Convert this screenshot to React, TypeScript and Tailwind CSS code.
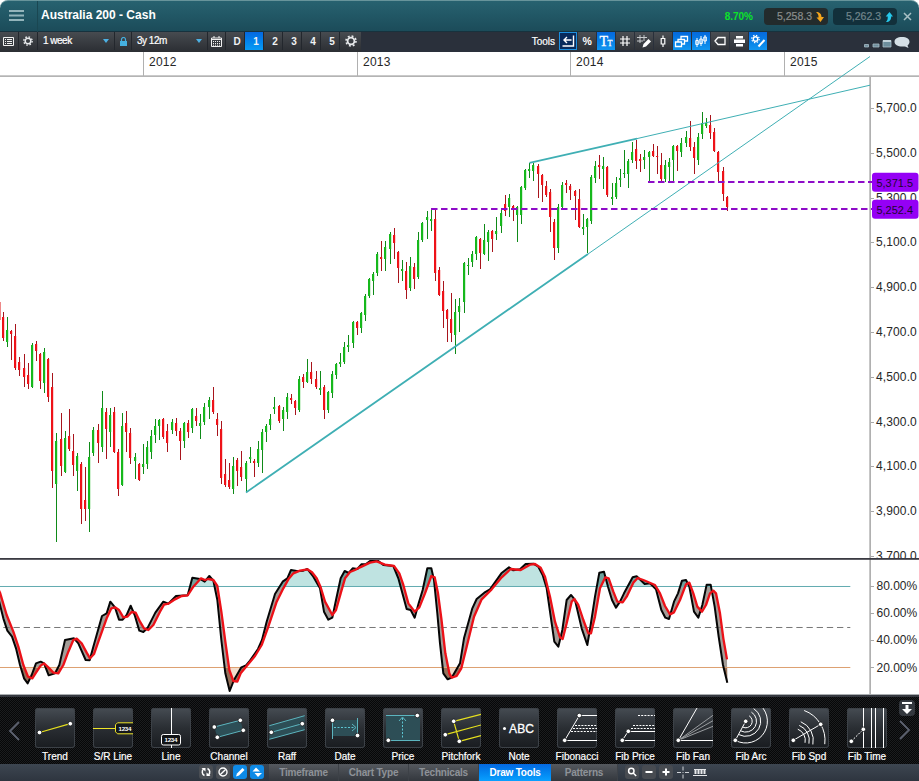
import type { ReactNode } from "react";
import clsx from "clsx";

type Candle = ["r" | "g", number, number, number, number];

// [colour, high, body top, body bottom, low]
const candles: Candle[] = [
  ["r", 312, 317, 338, 341], ["g", 317, 330, 342, 347], ["r", 330, 331, 334, 360], ["r", 324, 336, 368, 370],
  ["r", 357, 362, 370, 376], ["r", 354, 368, 377, 387], ["r", 363, 375, 384, 389], ["g", 343, 345, 387, 388],
  ["r", 341, 344, 351, 361], ["r", 353, 354, 381, 389], ["g", 348, 352, 383, 393], ["r", 358, 359, 397, 402],
  ["r", 373, 387, 471, 488], ["g", 433, 441, 484, 542], ["r", 413, 439, 466, 476], ["g", 431, 438, 472, 473],
  ["r", 409, 436, 449, 451], ["r", 434, 451, 465, 476], ["g", 453, 456, 471, 491], ["r", 462, 464, 509, 524],
  ["r", 467, 500, 509, 521], ["g", 442, 457, 509, 532], ["g", 427, 430, 453, 456], ["r", 424, 430, 443, 463],
  ["g", 391, 408, 447, 452], ["r", 408, 412, 429, 459], ["g", 408, 415, 432, 447], ["r", 407, 412, 452, 453],
  ["r", 449, 452, 489, 496], ["g", 413, 426, 485, 486], ["r", 411, 423, 432, 452], ["r", 428, 433, 458, 464],
  ["g", 453, 457, 461, 479], ["r", 463, 464, 480, 481], ["g", 444, 464, 467, 474], ["g", 441, 447, 464, 469],
  ["g", 430, 436, 452, 459], ["g", 419, 426, 435, 443], ["g", 419, 420, 426, 440], ["r", 418, 419, 437, 439],
  ["r", 424, 431, 443, 452], ["g", 419, 422, 430, 434], ["r", 418, 423, 431, 436], ["r", 428, 431, 441, 460],
  ["g", 422, 423, 441, 448], ["r", 420, 423, 432, 438], ["g", 408, 409, 428, 433], ["r", 408, 416, 421, 426],
  ["g", 414, 423, 426, 439], ["g", 403, 407, 422, 425], ["g", 397, 400, 407, 419], ["r", 387, 400, 412, 414],
  ["r", 413, 419, 425, 436], ["r", 421, 429, 478, 484], ["r", 459, 474, 485, 487], ["r", 463, 480, 487, 489],
  ["g", 457, 466, 489, 494], ["r", 458, 460, 471, 486], ["r", 451, 467, 477, 481], ["g", 461, 463, 479, 492],
  ["g", 447, 457, 459, 463], ["r", 459, 461, 463, 477], ["g", 441, 449, 463, 467], ["g", 429, 432, 450, 473],
  ["g", 424, 426, 432, 442], ["g", 414, 419, 425, 430], ["g", 397, 407, 409, 414], ["r", 405, 406, 421, 423],
  ["g", 407, 410, 419, 431], ["g", 393, 397, 412, 419], ["r", 394, 398, 400, 404], ["r", 400, 401, 408, 415],
  ["g", 376, 379, 410, 412], ["r", 374, 377, 382, 388], ["g", 359, 372, 382, 383], ["r", 362, 372, 379, 384],
  ["r", 371, 379, 387, 389], ["g", 371, 388, 390, 395], ["r", 385, 387, 410, 419], ["g", 391, 392, 410, 413],
  ["g", 371, 374, 393, 398], ["g", 363, 364, 375, 379], ["g", 353, 362, 364, 367], ["g", 342, 347, 362, 364],
  ["g", 335, 345, 347, 352], ["g", 321, 322, 343, 348], ["r", 321, 322, 328, 335], ["g", 312, 313, 328, 333],
  ["g", 294, 296, 315, 321], ["g", 278, 279, 296, 298], ["g", 272, 274, 281, 295], ["g", 252, 254, 273, 276],
  ["r", 241, 257, 259, 271], ["g", 241, 247, 259, 271], ["g", 232, 234, 249, 264], ["r", 228, 235, 243, 259],
  ["r", 251, 252, 268, 283], ["g", 260, 269, 271, 281], ["r", 262, 271, 290, 299], ["g", 257, 266, 288, 291],
  ["r", 263, 267, 279, 289], ["g", 232, 240, 277, 279], ["g", 222, 223, 240, 242], ["g", 211, 217, 220, 239],
  ["g", 209, 219, 221, 231], ["r", 209, 219, 273, 281], ["r", 267, 270, 295, 296], ["r", 281, 291, 311, 328],
  ["r", 309, 310, 319, 342], ["r", 293, 319, 333, 342], ["g", 299, 312, 335, 354], ["g", 298, 306, 312, 332],
  ["g", 262, 263, 302, 313], ["g", 258, 265, 266, 275], ["g", 251, 254, 262, 267], ["g", 236, 237, 254, 260],
  ["r", 238, 239, 253, 269], ["g", 224, 240, 254, 255], ["g", 230, 232, 242, 261], ["r", 230, 231, 239, 252],
  ["g", 217, 231, 234, 240], ["g", 208, 213, 226, 233], ["r", 195, 204, 211, 216], ["g", 194, 198, 207, 217],
  ["r", 205, 206, 210, 221], ["g", 206, 207, 215, 242], ["g", 186, 187, 215, 224], ["g", 169, 170, 188, 190],
  ["g", 163, 169, 171, 178], ["g", 163, 165, 171, 181], ["r", 164, 166, 174, 198], ["r", 174, 175, 185, 202],
  ["r", 181, 186, 195, 197], ["r", 189, 192, 217, 232], ["r", 219, 222, 248, 260], ["g", 204, 207, 248, 253],
  ["g", 182, 185, 207, 209], ["r", 180, 183, 185, 193], ["r", 184, 186, 190, 200], ["r", 190, 191, 196, 220],
  ["r", 189, 199, 227, 228], ["g", 214, 227, 229, 235], ["g", 218, 219, 227, 253], ["g", 175, 177, 221, 224],
  ["g", 161, 166, 178, 183], ["r", 155, 165, 167, 179], ["g", 157, 166, 169, 189], ["r", 166, 167, 195, 197],
  ["g", 183, 197, 199, 205], ["g", 177, 183, 197, 199], ["g", 169, 178, 180, 187], ["g", 150, 173, 174, 178],
  ["g", 159, 161, 174, 188], ["g", 142, 152, 160, 163], ["r", 140, 149, 161, 169], ["r", 154, 159, 161, 172],
  ["g", 150, 157, 160, 169], ["g", 151, 152, 157, 182], ["r", 144, 151, 156, 157], ["r", 146, 156, 157, 174],
  ["r", 153, 165, 179, 181], ["g", 160, 165, 179, 182], ["g", 158, 162, 167, 182], ["g", 145, 146, 160, 182],
  ["r", 145, 146, 151, 171], ["g", 138, 143, 152, 157], ["g", 131, 137, 143, 147], ["r", 121, 138, 147, 151],
  ["r", 142, 147, 158, 174], ["g", 133, 137, 160, 165], ["g", 112, 123, 134, 139], ["g", 118, 123, 126, 128],
  ["r", 115, 125, 133, 139], ["r", 128, 132, 151, 152], ["r", 151, 152, 172, 181], ["r", 167, 171, 194, 201],
  ["r", 196, 197, 207, 211],
];

// oscillator lines, in thirds of a pixel
const fastLine =
  "-6,140 0,165 10,205 22,242 36,260 48,295 60,345 72,385 83,400 95,375 108,340 122,335 132,340 146,376 165,370 178,345 195,270 222,265 235,280 257,330 269,331 280,290 306,198 320,190 331,155 345,172 357,209 368,209 380,195 392,167 404,195 418,242 430,246 442,235 466,188 490,155 505,161 528,138 563,136 577,83 600,87 614,95 628,78 640,92 652,150 664,270 676,370 689,423 702,390 724,352 738,346 750,332 774,297 786,270 800,215 825,132 848,95 862,85 873,60 890,63 910,62 922,57 940,80 960,115 972,185 985,209 997,203 1008,150 1022,85 1034,63 1046,69 1058,55 1072,57 1084,43 1098,42 1110,33 1135,33 1150,45 1180,48 1195,85 1220,177 1232,180 1244,203 1256,160 1268,120 1282,55 1294,55 1302,90 1312,190 1320,280 1330,370 1343,388 1355,383 1380,340 1392,265 1417,175 1430,147 1453,128 1470,118 1504,70 1527,52 1540,61 1560,58 1577,42 1600,41 1615,50 1628,75 1640,115 1663,275 1675,290 1687,240 1700,150 1713,135 1725,150 1745,235 1762,285 1772,225 1785,140 1798,68 1812,65 1824,110 1836,150 1848,173 1860,155 1872,130 1898,82 1910,79 1934,102 1950,100 1968,118 1984,180 1996,203 2007,207 2022,155 2034,130 2046,92 2058,90 2068,110 2082,185 2095,203 2107,165 2120,104 2132,104 2144,170 2156,260 2169,345 2182,398";
const slowLine =
  "-6,115 0,128 20,195 40,245 55,290 70,345 84,380 97,385 110,365 122,347 132,340 145,352 160,368 175,370 190,345 205,305 220,270 230,266 245,280 260,308 270,325 282,312 295,275 320,205 334,175 345,172 357,180 370,202 382,200 395,186 407,188 420,215 432,235 445,240 460,225 480,185 492,164 505,161 525,148 545,138 563,136 580,110 603,85 615,90 625,87 640,90 652,108 664,185 676,275 688,360 700,393 712,395 722,370 740,348 765,318 785,285 805,230 830,155 850,115 865,88 880,70 900,62 922,58 936,67 950,85 962,112 975,155 997,195 1008,180 1022,130 1035,85 1050,66 1065,60 1080,52 1110,38 1130,34 1155,44 1182,48 1198,70 1210,105 1225,160 1244,185 1258,172 1275,130 1294,78 1304,82 1314,130 1324,205 1336,310 1348,370 1355,383 1370,378 1384,355 1400,290 1422,200 1445,148 1475,118 1505,82 1532,57 1562,60 1590,44 1605,42 1622,53 1635,80 1650,140 1665,215 1680,262 1688,267 1700,220 1715,155 1723,147 1735,165 1750,210 1765,250 1773,250 1785,200 1800,115 1816,82 1826,85 1840,125 1852,155 1868,157 1880,140 1900,98 1913,84 1930,90 1965,105 1980,130 1995,168 2010,193 2022,187 2040,150 2058,103 2068,98 2080,130 2092,170 2106,185 2118,165 2130,130 2140,122 2148,130 2160,190 2170,265 2181,328";
const band = `${fastLine} ${slowLine.split(" ").reverse().join(" ")}`;

const years = [
  { label: "2012", x: 143 },
  { label: "2013", x: 357 },
  { label: "2014", x: 570 },
  { label: "2015", x: 784 },
];
const prices = ["5,700.0", "5,500.0", "5,300.0", "5,100.0", "4,900.0", "4,700.0", "4,500.0", "4,300.0", "4,100.0", "3,900.0", "3,700.0"];
const percents = ["80.00%", "60.00%", "40.00%", "20.00%"];
const levels = [
  { label: "5,371.5", x: 648, y: 182 },
  { label: "5,252.4", x: 431, y: 209 },
];

function Chart() {
  return (
    <svg
      className="block shrink-0 bg-white font-['Liberation_Sans',Arial,sans-serif]"
      width={919}
      height={643}
      viewBox="0 52 919 643"
    >
      <defs>
        <clipPath id="price">
          <rect x={0} y={77} width={919} height={481} />
        </clipPath>
        <clipPath id="over">
          <rect x={-6} y={0} width={2300} height={109} />
        </clipPath>
        <clipPath id="under">
          <rect x={-6} y={352} width={2300} height={80} />
        </clipPath>
      </defs>

      {years.map((year) => (
        <g key={year.label}>
          <rect x={year.x} y={52} width={1} height={24} fill="#b0b0b0" />
          <text x={year.x + 6} y={66} fontSize={12} letterSpacing={0.25} fill="#262626">
            {year.label}
          </text>
        </g>
      ))}
      <rect x={0} y={75.3} width={919} height={1.7} fill="#b4b4b4" />
      <rect x={869.3} y={77} width={1.7} height={618} fill="#b0b0b0" />

      <g clipPath="url(#price)">
        {prices.map((price, i) => (
          <g key={price}>
            <rect x={871} y={Math.round(108 + i * 44.8)} width={3} height={1} fill="#a8a8a8" />
            <text x={876} y={112 + i * 44.8} fontSize={12} letterSpacing={0.12} fill="#262626">
              {price}
            </text>
          </g>
        ))}
        <rect x={0} y={302} width={1} height={18} fill="#e88" />
        {candles.map(([tone, high, top, bottom, low], i) => {
          const x = Math.floor(3.5 + i * 4.112);
          return (
            <g key={i}>
              <rect x={x} y={high} width={1} height={low - high} fill={tone === "r" ? "#a8141c" : "#0f8a18"} />
              <rect x={x - 1} y={top} width={2.2} height={bottom - top} fill={tone === "r" ? "#ee1218" : "#16b81c"} />
            </g>
          );
        })}
      </g>

      <g stroke="#3fafb4" fill="none">
        <path d="M246 492.5 588 254M529.5 162.8 637 138.6" strokeWidth={1.8} />
        <path d="M588 254 870 56.5M637 138.6 870 85.2" strokeWidth={1} />
      </g>

      {levels.map((level) => (
        <g key={level.label}>
          <path d={`M${level.x} ${level.y}H872`} stroke="#8e0cc8" strokeWidth={2} strokeDasharray="6.5 3.5" />
          <rect x={872} y={level.y - 9.2} width={46.5} height={19} rx={3} fill="#9500f5" />
          <text x={876.5} y={level.y + 4.8} fontSize={10} textLength={36.5} lengthAdjust="spacingAndGlyphs" fill="#1d0730">
            {level.label}
          </text>
        </g>
      ))}

      <rect x={0} y={558} width={919} height={1.8} fill="#3a3a42" />
      <rect x={0} y={694} width={919} height={1} fill="#a9adb0" />

      <g transform="translate(0 550) scale(.33333)">
        <polygon points={`-6,109 ${slowLine} 2181,109`} fill="#bfe3e1" clipPath="url(#over)" />
        <polygon points={`-6,352 ${slowLine} 2181,352`} fill="#f3dccb" clipPath="url(#under)" />
        <polygon points={band} fill="#a39d98" />
        <polygon points={band} fill="#6fa39d" clipPath="url(#over)" />
        <polygon points={band} fill="#94715a" clipPath="url(#under)" />
        <path d="M0 109.500H2551" stroke="#62abb1" strokeWidth={3} />
        <path d="M0 352.500H2551" stroke="#dda070" strokeWidth={3} />
        <path d="M10 232.500H2551" stroke="#777" strokeWidth={3} strokeDasharray="19 11.500" />
        <polyline points={fastLine} fill="none" stroke="#050505" strokeWidth={6} strokeLinejoin="round" />
        <polyline points={slowLine} fill="none" stroke="#ec1118" strokeWidth={7} strokeLinejoin="round" />
      </g>
      {percents.map((percent, i) => (
        <g key={percent}>
          <rect x={870} y={586 + i * 27} width={4} height={1} fill="#a8a8a8" />
          <text x={876.5} y={590 + i * 27.2} fontSize={12} fill="#262626">
            {percent}
          </text>
        </g>
      ))}
    </svg>
  );
}

function GearIcon({ size = 12 }: { size?: number }) {
  return (
    <svg width={size} height={size} viewBox="0 0 12 12" fill="none" stroke="#e8eaec">
      <circle cx={6} cy={6} r={3.4} strokeWidth={1.8} />
      <circle cx={6} cy={6} r={5} strokeWidth={1.6} strokeDasharray="1.9 2.03" />
    </svg>
  );
}

function Dropdown({ label }: { label: string }) {
  return (
    <div className="flex h-full items-center justify-between border-r border-[#23272d] pr-[5px] pl-[5px] text-[10px] font-medium tracking-[-0.5px] text-white [-webkit-text-stroke:0.2px_white]">
      <span className="pb-px">{label}</span>
      <svg width={6} height={4} viewBox="0 0 6 4">
        <path d="M0 0h6L3 4z" fill="#4db1e4" />
      </svg>
    </div>
  );
}

const toolbarIcons: { icon: ReactNode; active?: boolean; dark?: boolean }[] = [
  { icon: <path d="M14.500 3.500V14H3.500M12.500 8H5M8 5 5 8l3 3" strokeWidth={1.4} />, dark: true },
  { icon: <text x={4.500} y={13} fontSize={10.500} fontWeight={700} fill="#fff" stroke="none">%</text> },
  {
    icon: (
      <g fill="#fff" stroke="#fff" strokeWidth={0.300} className="font-['Liberation_Serif',serif]">
        <text x={2.500} y={13.500} fontSize={14}>T</text>
        <text x={10.500} y={13.500} fontSize={8}>T</text>
      </g>
    ),
    active: true,
  },
  { icon: <path d="M7 4v10M11 4v10M4 7h10M4 11h10" strokeWidth={1.2} /> },
  {
    icon: (
      <>
        <path d="M5 3v8M9 3v6M2 5.500h10M2 9h6" strokeWidth={1} stroke="#c8cbce" />
        <path d="M7.500 15.500l1-3.500 5-5 2.500 2.500-5 5z" fill="#fff" stroke="none" />
      </>
    ),
  },
  { icon: <path d="M9 3.500v3M9 12v3M7.200 6.500h3.600V12H7.200z" strokeWidth={1.200} /> },
  { icon: <path d="M2.500 10h6v4.500h-6zM5 10V7.500h6.500V12H9M8 7.500V4.500h6.500V9H11.500" strokeWidth={1.300} />, active: true },
  {
    icon: <path d="M5 6v9M3.800 8.500h2.500v4H3.800zM9 4v10M7.800 7h2.500v4.500H7.800zM13 3v9M11.800 5h2.500v4h-2.500z" strokeWidth={1} />,
    active: true,
  },
  { icon: <path d="M4 9 7 5.500h7v7H7z" strokeWidth={1.300} /> },
  {
    icon: (
      <g fill="#fff" stroke="none">
        <path d="M6 4h7v2.500H6zM4 7.500h11V11H4zM6 12h7v2.500H6z" />
      </g>
    ),
  },
  {
    icon: (
      <>
        <circle cx={6.500} cy={7} r={2.200} strokeWidth={1.400} />
        <circle cx={6.500} cy={7} r={3.700} strokeWidth={1.200} strokeDasharray="1.450 1.450" />
        <path d="M9.500 14.500l6-6.500" strokeWidth={2} />
      </>
    ),
    active: true,
  },
];

function Header() {
  return (
    <header className="flex h-8 shrink-0 items-center rounded-t-lg border-t border-[#67949b] bg-linear-to-b from-[#276270] to-[#1b4b59] shadow-[inset_0_-1px_0_#17323e]">
      <div className="flex h-full w-[38px] items-center justify-center border-r border-[#1a4752] pr-1 pb-0.5">
        <svg width={15} height={11} viewBox="0 0 15 11" stroke="#93b4bb" strokeWidth={1.8}>
          <path d="M0 1h15M0 5.500h15M0 10h15" />
        </svg>
      </div>
      <h1 className="ml-[3px] pb-[3px] text-xs font-bold text-white">Australia 200 - Cash</h1>
      <span className="ml-auto text-[10px] font-bold text-[#0ce32a]">8.70%</span>
      <div className="ml-[11px] flex h-[17px] w-16 items-center justify-end gap-1 rounded bg-[#232b2c] pr-1 text-[10.5px] text-[#8b8e8c] [-webkit-text-stroke:0.2px_#8b8e8c]">
        5,258.3
        <svg width={8} height={10} viewBox="0 0 8 10">
          <path d="M0 0c3.500 0 5.500 2 5.500 5H8L4.500 10 .5 5.500h2C2.700 3 2 1.500 0 0z" fill="#f5a51b" />
        </svg>
      </div>
      <div className="ml-[5px] flex h-[17px] w-16 items-center justify-end gap-1 rounded bg-[#12303b] pr-1 text-[10.5px] text-[#71858b] [-webkit-text-stroke:0.2px_#71858b]">
        5,262.3
        <svg width={8} height={10} viewBox="0 0 8 10">
          <path d="M1 10c3.500 0 5.200-2 5.200-5.500H8L4.500 0 .7 4.500h2C2.800 7 2.500 8.500 1 10z" fill="#26c8ea" />
        </svg>
      </div>
      <svg className="mr-[7px] ml-1.5" width={9} height={9} viewBox="0 0 9 9" stroke="#a9c0c5" strokeWidth={1.5}>
        <path d="M1 1l7 7M8 1 1 8" />
      </svg>
    </header>
  );
}

function Toolbar() {
  return (
    <div className="flex h-5 shrink-0 items-center bg-[#2a303b]">
      <div className="grid h-full grid-cols-[19px_19px_77px_17px_76px_18px_19px_19px_19px_19px_19px_19px_21px] items-center bg-linear-to-b from-[#474b50] to-[#2b2e33] pb-0.5 *:h-full">
        <div className="flex items-center justify-center border-r border-[#23272d] pr-0.5">
          <svg width={11} height={9} viewBox="0 0 11 9" stroke="#f0f0f0" fill="none">
            <path d="M.5.5h10v8H.5zM2 2.500h1M4 2.500h5M2 4.500h1M4 4.500h5M2 6.500h1M4 6.500h5" />
          </svg>
        </div>
        <div className="flex items-center justify-center border-r border-[#23272d]">
          <GearIcon size={10} />
        </div>
        <Dropdown label="1 week" />
        <div className="flex items-center justify-center border-r border-[#23272d]">
          <svg width={7} height={9} viewBox="0 0 7 9">
            <path d="M1.500 4V2.500a2 2 0 0 1 4 0V4" fill="none" stroke="#45b0e0" strokeWidth={1.200} />
            <rect y={4} width={7} height={5} fill="#45b0e0" />
          </svg>
        </div>
        <Dropdown label="3y 12m" />
        <div className="flex items-center justify-center border-r border-[#23272d]">
          <svg width={11} height={11} viewBox="0 0 11 11" fill="none" stroke="#f0f0f0">
            <path d="M.5 2h10v8.500H.5zM1 3.500h9M3 0v2M8 0v2" />
            <path d="M2 5.500h7M2 7.500h7M2 9.200h7" strokeDasharray="1 1" />
          </svg>
        </div>
        {["D", "1", "2", "3", "4", "5"].map((key) => (
          <div
            key={key}
            className={clsx(
              "flex items-center justify-center border-r border-[#23272d] pt-px pl-1 text-[10px] font-bold text-[#f0f2f4]",
              key === "1" && "bg-linear-to-b from-[#0668e0] to-[#0a9bf5]"
            )}
          >
            {key}
          </div>
        ))}
        <div className="flex items-center justify-center">
          <GearIcon />
        </div>
      </div>
      <span className="ml-auto pb-0.5 text-[10px] text-white [-webkit-text-stroke:0.2px_white]">Tools</span>
      <div className="ml-1 flex h-full gap-px">
        {toolbarIcons.map((tool, index) => (
          <div
            key={index}
            className={clsx(
              "h-[18px] w-[18px]",
              tool.active && "bg-linear-to-b from-[#0668dc] to-[#1196f0]",
              tool.dark && "bg-[#082a5c] shadow-[inset_0_0_0_1px_#1d8fe0]",
              !tool.active && !tool.dark && "bg-linear-to-b from-[#4a4e53] to-[#303338]"
            )}
          >
            <svg width={18} height={18} viewBox="0 0 18 18" fill="none" stroke="#fff">
              {tool.icon}
            </svg>
          </div>
        ))}
      </div>
      <svg className="mr-[9px] ml-[96px]" width={47} height={14} viewBox="0 0 47 14">
        <g fill="#6d8d9c" stroke="#a8bcc6" strokeWidth={0.800}>
          <path d="M1.500 9.500h4v2.500h-4zM10 9h6v3h-6zM20 5.500h8V12h-8z" />
        </g>
        <path d="M20 6h8" stroke="#c3d2da" strokeWidth={2} />
        <path d="M39 2c4.500 0 7.500 2 7.500 4.800 0 1.600-.8 2.800-2 3.600l1 2.600-3.500-1.600c-6 .8-10.500-1-10.500-4.600C31.500 4 34.500 2 39 2z" fill="#d6dfe6" />
      </svg>
    </div>
  );
}

function Dots({ points }: { points: number[][] }) {
  return (
    <>
      {points.map(([x, y]) => (
        <circle key={`${x}-${y}`} cx={x} cy={y} r={2.3} fill="#fff" stroke="#15181b" strokeWidth={0.800} />
      ))}
    </>
  );
}

// arc around (cx, cy) between two angles in degrees
function arc(cx: number, cy: number, r: number, from: number, to: number) {
  const point = (deg: number) => {
    const rad = (deg * Math.PI) / 180;
    return `${cx + r * Math.cos(rad)} ${cy + r * Math.sin(rad)}`;
  };
  return `M${point(from)}A${r} ${r} 0 ${to - from > 180 ? 1 : 0} 1 ${point(to)}`;
}

const drawTools: { name: string; icon: ReactNode }[] = [
  {
    name: "Trend",
    icon: (
      <>
        <path d="M4.500 24.500 35.300 15.700" stroke="#e6e01e" strokeWidth={1.200} />
        <Dots points={[[4.5, 24.5], [35.3, 15.7]]} />
      </>
    ),
  },
  {
    name: "S/R Line",
    icon: (
      <>
        <path d="M0 20.500h22M40 14.800H24.500l-2 2v7l2 2H40" stroke="#f0e628" fill="#15181b" />
        <text x={25.500} y={22.700} fontSize={6.200} fontWeight={700} textLength={13} fill="#fff" stroke="none">1234</text>
      </>
    ),
  },
  {
    name: "Line",
    icon: (
      <>
        <path d="M20.500 0v40" />
        <rect x={10.500} y={26.500} width={19} height={10.500} rx={1.800} fill="#111315" />
        <text x={13.500} y={34.200} fontSize={6.200} fontWeight={700} textLength={13} fill="#fff" stroke="none">1234</text>
      </>
    ),
  },
  {
    name: "Channel",
    icon: (
      <>
        <path d="M5.300 19 31.300 12.300l3 10-26 7z" fill="#2d4e56" stroke="none" />
        <path d="M5.300 19 31.300 12.300M8.300 29.300 34.300 22.300" stroke="#5cb5bf" />
        <Dots points={[[5.3, 19], [31.3, 12.3], [8.3, 29.3], [34.3, 22.3]]} />
      </>
    ),
  },
  {
    name: "Raff",
    icon: (
      <>
        <path d="M2.300 17.700 37.700 7.700v14L2.300 31.300z" fill="#2d4e56" stroke="none" />
        <path d="M2.300 17.700 37.700 7.700M4.300 24.300l31-8.600M2.300 31.300 37.700 21.700" stroke="#5cb5bf" />
        <Dots points={[[4.3, 24.3], [35.3, 15.7]]} />
      </>
    ),
  },
  {
    name: "Date",
    icon: (
      <>
        <path d="M7.500 12h25v16h-25z" fill="#2d4e56" stroke="none" />
        <path d="M7.500 12v19M32.500 10v18M27 16l4 3.500-4 3.500" stroke="#5cb5bf" />
        <path d="M9 19.500h21" stroke="#5cc5d2" strokeDasharray="2 1.500" />
        <Dots points={[[7.5, 12.3], [32.5, 27.5]]} />
      </>
    ),
  },
  {
    name: "Price",
    icon: (
      <>
        <path d="M3 7.500h34v25H3z" fill="#2d4e56" stroke="none" />
        <path d="M3 7.500h31M5 32.500h32M16 13l3.500-4 3.500 4" stroke="#5cb5bf" />
        <path d="M19.500 10v21" stroke="#5cc5d2" strokeDasharray="2 1.500" />
        <Dots points={[[34.3, 7.5], [5.3, 32.3]]} />
      </>
    ),
  },
  {
    name: "Pitchfork",
    icon: (
      <>
        <path d="M12.700 13.300l5.600 20M4.300 26.700 40 17M12.700 13.300 40 6.300M18.300 33.300 40 27.700" stroke="#e6e01e" strokeWidth={1.200} />
        <Dots points={[[4.3, 26.7], [12.7, 13.3], [18.3, 33.3]]} />
      </>
    ),
  },
  {
    name: "Note",
    icon: (
      <>
        <circle cx={5.500} cy={20.500} r={1.500} fill="#fff" stroke="none" />
        <text x={10} y={25} fontSize={12} fill="#fff" stroke="#fff" strokeWidth={0.300} textLength={25}>ABC</text>
      </>
    ),
  },
  {
    name: "Fibonacci",
    icon: (
      <>
        <path d="M7.700 32.300 22.300 7.700M22.300 7.500H40M8 32.500h32" />
        <path d="M18 17.500h22M16 20.500h24M14 23.500h26" strokeDasharray="2 1.200" />
        <Dots points={[[22.3, 7.5], [7.7, 32.3]]} />
      </>
    ),
  },
  {
    name: "Fib Price",
    icon: (
      <>
        <path d="M7.300 32.300l6-9M13.300 23.500H40M7.300 32.500H40" />
        <path d="M23 7.500h17M18 17.500h22M16 20.500h24" strokeDasharray="2 1.200" />
        <Dots points={[[7.3, 32.3], [13.3, 23.3]]} />
      </>
    ),
  },
  {
    name: "Fib Fan",
    icon: (
      <>
        <path d="M5.300 32.300 40 7.300M5.300 32.300 40 12.700M5.300 32.300 40 18.300" stroke="#9a9da0" />
        <path d="M24 0 5.300 32.500H40" />
        <Dots points={[[5.3, 32.3]]} />
      </>
    ),
  },
  {
    name: "Fib Arc",
    icon: (
      <>
        <path d="M4.300 32.300l10.400-19" />
        <path d={[6.5, 10.8, 15, 21.7].map((r) => arc(14.7, 13.3, r, -58, 118)).join("")} />
        <Dots points={[[14.7, 13.3], [4.3, 32.3]]} />
      </>
    ),
  },
  {
    name: "Fib Spd",
    icon: (
      <>
        <path d="M4.300 32.300l27.400-16" />
        <path d={arc(4.3, 32.3, 31.7, -70, 7) + [12, 16, 20].map((r) => arc(4.3, 32.3, r, -68, 12)).join("")} />
        <Dots points={[[4.3, 32.3], [31.7, 16.3]]} />
      </>
    ),
  },
  {
    name: "Fib Time",
    icon: (
      <>
        <path d="M16.500 0v40M24.500 0v40M28.500 0v40M36.500 0v40" />
        <path d="M4.300 33.300l12-12" strokeDasharray="2 1.300" />
        <Dots points={[[4.3, 33.3], [16.3, 21.3]]} />
      </>
    ),
  },
];

function DrawTools() {
  return (
    <div className="flex h-[69px] shrink-0 border-t-2 border-[#35383f] bg-[#060708] bg-[repeating-linear-gradient(45deg,#1b1c1e_0,#1b1c1e_1px,transparent_1px,transparent_2px)] bg-size-[2px_2px]">
      <div className="flex w-[26px] items-center pl-2">
        <svg width={12} height={20} viewBox="0 0 12 20" fill="none" stroke="#5d6270" strokeWidth={1.800}>
          <path d="M11 1 2 10l9 9" />
        </svg>
      </div>
      {drawTools.map((tool) => (
        <div key={tool.name} className="flex w-[58px] shrink-0 flex-col items-center pt-[11px]">
          <svg
            className="rounded-[3px] bg-linear-to-b from-[#464c53] via-[#2a2e33] to-[#191c20] shadow-[inset_0_0_0_1px_#3c4147]"
            width={40}
            height={40}
            viewBox="0 0 40 40"
            fill="none"
            stroke="#fff"
          >
            {tool.icon}
          </svg>
          <span className="mt-[3px] text-[10px] leading-3 whitespace-nowrap text-white [-webkit-text-stroke:0.2px_white]">
            {tool.name}
          </span>
        </div>
      ))}
      <div className="-ml-px flex w-6 flex-col items-start pt-[3px] pl-1">
        <div className="flex h-4 w-4 items-center justify-center rounded-sm bg-[#34383e]">
          <svg width={10} height={12} viewBox="0 0 10 12" fill="#fff">
            <path d="M0 0h10v2H0zM3.500 3h3v4H10l-5 5-5-5h3.500z" />
          </svg>
        </div>
        <svg className="mt-1" width={12} height={20} viewBox="0 0 12 20" fill="none" stroke="#5d6270" strokeWidth={1.800}>
          <path d="M1 1l9 9-9 9" />
        </svg>
      </div>
    </div>
  );
}

const tabs = [
  { label: "Timeframe", className: "w-[70px]" },
  { label: "Chart Type", className: "w-[70px]" },
  { label: "Technicals", className: "w-[70px]" },
  { label: "Draw Tools", className: "w-[72px]" },
  { label: "Patterns", className: "w-[67px]" },
];

const chartActions: { icon: ReactNode; active?: boolean }[] = [
  {
    icon: (
      <>
        <path d="M5.500 10.500A4 4 0 0 1 4.500 4M8.500 3.500A4 4 0 0 1 9.500 10" strokeWidth={1.500} />
        <path d="M2.500 3h4v3.500zM11.500 11h-4V7.500z" fill="#fff" stroke="none" />
      </>
    ),
  },
  { icon: <path d="M11 7a4 4 0 1 1-8 0 4 4 0 0 1 8 0zM4.200 9.800l5.600-5.600" strokeWidth={1.400} /> },
  { icon: <path d="M3 11.500l1-3L9.500 3l2 2L6 10.500z" fill="#fff" stroke="none" />, active: true },
  { icon: <path d="M6 2.500 10 6.500H2.500zM8 12 4.500 8H12z" fill="#fff" stroke="none" />, active: true },
];

const zoomActions: ReactNode[] = [
  <path d="M9 6a2.700 2.700 0 1 1-5.400 0A2.700 2.700 0 0 1 9 6zM8.200 8l3 3" strokeWidth={1.500} />,
  <path d="M3.500 7h7" strokeWidth={2} />,
  <path d="M3.500 7h7M7 3.500v7" strokeWidth={2} />,
];

function BottomBar() {
  return (
    <footer className="flex h-[17px] shrink-0 bg-linear-to-b from-[#3d4651] to-[#2e353f] pl-[199px]">
      <div className="flex gap-[3px] pt-px">
        {chartActions.map((action, index) => (
          <svg
            key={index}
            className={clsx("rounded-[3px]", action.active ? "bg-[#0e8ae6]" : "bg-[#4a4e54]")}
            width={14}
            height={14}
            viewBox="0 0 14 14"
            fill="none"
            stroke="#fff"
          >
            {action.icon}
          </svg>
        ))}
      </div>
      <nav className="ml-[5px] flex h-full bg-linear-to-b from-[#55595f] to-[#33373d]">
        {tabs.map((tab) => (
          <div
            key={tab.label}
            className={clsx(
              "flex items-center justify-center pb-px text-[10px] font-bold tracking-[-0.2px]",
              tab.className,
              tab.label === "Draw Tools"
                ? "bg-linear-to-b from-[#0668e0] to-[#0aa0ff] text-white"
                : "border-r border-[#3d4147] text-[#8e9298]"
            )}
          >
            {tab.label}
          </div>
        ))}
      </nav>
      <div className="ml-[7px] flex gap-[3px] pt-px">
        {zoomActions.map((icon, index) => (
          <svg key={index} className="rounded-[3px] bg-[#474b51]" width={14} height={14} viewBox="0 0 14 14" fill="none" stroke="#fff">
            {icon}
          </svg>
        ))}
        <svg width={14} height={14} viewBox="0 0 14 14" fill="none" stroke="#cfd3d7">
          <path d="M1 7.500h4M9 7.500h4M7 1.500v4M7 9.500v4M6.500 7.500h1" />
        </svg>
        <svg width={14} height={14} viewBox="0 0 14 14" fill="none" stroke="#e6e8ea">
          <path d="M1 4.500h12" strokeWidth={1} />
          <path d="M1.500 7h11" strokeWidth={4} strokeDasharray="2 1" />
          <path d="M0 10.500h14" />
        </svg>
      </div>
    </footer>
  );
}

export default function App() {
  return (
    <div className="flex h-[781px] w-[919px] flex-col overflow-hidden bg-white font-['Liberation_Sans',Arial,sans-serif]">
      <Header />
      <Toolbar />
      <Chart />
      <DrawTools />
      <BottomBar />
    </div>
  );
}
